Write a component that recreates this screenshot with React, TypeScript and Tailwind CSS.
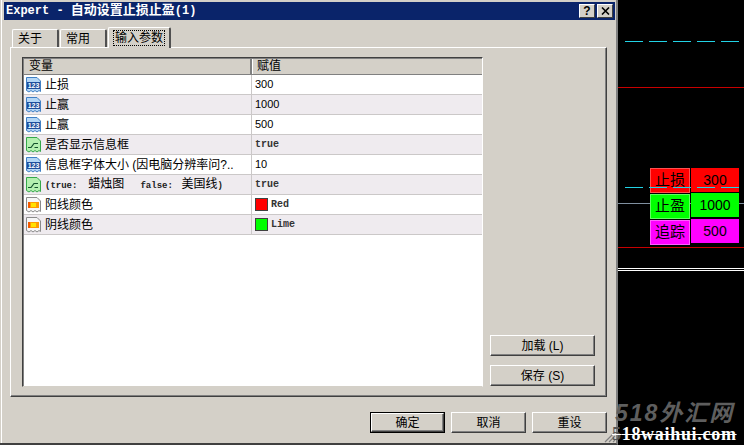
import type { ReactNode } from 'react';

const cjk = "font-['Liberation_Sans','Noto_Sans_CJK_SC',sans-serif]";
const mono = "font-['Liberation_Mono','Noto_Sans_CJK_SC',monospace]";

type ParamRow = {
  kind: 'int' | 'bool' | 'color';
  name: ReactNode;
  value: string;
  swatch?: string;
};

const Ascii = ({ children }: { children: string }) => (
  <span className={`${mono} text-[9px] font-bold text-[#222]`}>{children}</span>
);

const rows: ParamRow[] = [
  { kind: 'int', name: '止损', value: '300' },
  { kind: 'int', name: '止赢', value: '1000' },
  { kind: 'int', name: '止赢', value: '500' },
  { kind: 'bool', name: '是否显示信息框', value: 'true' },
  { kind: 'int', name: '信息框字体大小 (因电脑分辨率问?..', value: '10' },
  {
    kind: 'bool',
    name: (
      <>
        <Ascii>{'(true:  '}</Ascii>蜡烛图<Ascii>{'   false: '}</Ascii> 美国线<Ascii>{')'}</Ascii>
      </>
    ),
    value: 'true',
  },
  { kind: 'color', name: '阳线颜色', value: 'Red', swatch: 'bg-[#ff0000]' },
  { kind: 'color', name: '阴线颜色', value: 'Lime', swatch: 'bg-[#00ff00]' },
];

function RowIcon({ kind }: { kind: ParamRow['kind'] }) {
  const palette = {
    int: { edge: '#3f7fc4', fill: '#b4d6f5' },
    bool: { edge: '#35a84a', fill: '#b4f0b0' },
    color: { edge: '#8a8a8a', fill: '#f6f6f6' },
  }[kind];
  return (
    <svg width="17" height="18" viewBox="0 0 17 18" className="shrink-0">
      <path
        d="M1.5 1.5H12L15.5 5V15.5L14 14.5L12 16L10 14.5L8 16L6 14.5L4 16L1.5 14.5Z"
        fill={palette.fill}
        stroke={palette.edge}
      />
      {kind === 'int' && (
        <>
          <rect x="2" y="6" width="13" height="7" fill="#1f4f9c" />
          <text x="8.5" y="12" textAnchor="middle" fontSize="7" fontWeight="700" fill="#fff" fontFamily="Liberation Sans">
            123
          </text>
        </>
      )}
      {kind === 'bool' && <path d="M3 11.5H6L9 7.5H13M9.5 11.5H13" fill="none" stroke="#14532d" strokeWidth="1.2" />}
      {kind === 'color' && (
        <>
          <rect x="3" y="6" width="11" height="6" fill="#ff9a00" />
          <rect x="6" y="7" width="5" height="4" fill="#ffe100" />
          <rect x="3" y="6" width="2" height="6" fill="#f25a00" />
        </>
      )}
    </svg>
  );
}

function RaisedButton({ label, wide, isDefault }: { label: string; wide?: boolean; isDefault?: boolean }) {
  const bevel =
    'flex items-center justify-center bg-[#d4d0c8] border border-t-white border-l-white border-r-[#404040] border-b-[#404040] shadow-[inset_-1px_-1px_0_#808080] text-[12px] text-black';
  if (isDefault) {
    return (
      <div className="w-[75px] h-[21px] border border-black flex">
        <div className={`flex-1 ${bevel}`}>{label}</div>
      </div>
    );
  }
  return <div className={`${wide ? 'w-[105px]' : 'w-[75px]'} h-[21px] ${bevel}`}>{label}</div>;
}

function Tab({ label, active, width }: { label: string; active?: boolean; width: string }) {
  return (
    <div
      className={`${width} flex items-center bg-[#d4d0c8] border-t border-l border-t-white border-l-white border-r-2 border-r-[#505050] rounded-t-[2px] text-[12px] text-black ${
        active ? 'h-[21px] z-10 -mb-px justify-center' : 'h-[18px] pl-[5px]'
      }`}
    >
      <span className={active ? 'outline outline-1 outline-dotted outline-black px-px leading-[14px]' : ''}>{label}</span>
    </div>
  );
}

function ChartDashes({ top }: { top: string }) {
  return (
    <div className={`absolute left-[7px] ${top} flex gap-[6px]`}>
      {[0, 1, 2, 3, 4].map((i) => (
        <div key={i} className="w-[18px] h-px bg-[#22d3e6]" />
      ))}
    </div>
  );
}

export default function App() {
  return (
    <div className={`relative w-[744px] h-[445px] flex overflow-hidden bg-black ${cjk}`}>
      {/* Dialog */}
      <div className="w-[618px] h-[445px] shrink-0 flex flex-col bg-[#d4d0c8] shadow-[inset_1px_0_0_#d4d0c8,inset_2px_0_0_#fff] border-r-2 border-r-[#808080] border-b-2 border-b-[#404040] pl-[4px] pr-[1px] pt-[2px] relative">
        <div className="h-[18px] shrink-0 flex items-center justify-between bg-[#0a246a] pl-[2px] pr-[2px]">
          <span className={`${mono} text-[12px] font-bold text-white whitespace-nowrap`}>
            Expert - <span className="text-[13px]">自动设置止损止盈</span>(1)
          </span>
          <div className="flex gap-[2px]">
            <div className="w-[16px] h-[14px] flex items-center justify-center bg-[#d4d0c8] border border-t-white border-l-white border-r-[#404040] border-b-[#404040] text-[12px] font-bold text-black leading-none">
              ?
            </div>
            <div className="w-[16px] h-[14px] flex items-center justify-center bg-[#d4d0c8] border border-t-white border-l-white border-r-[#404040] border-b-[#404040]">
              <svg width="9" height="8" viewBox="0 0 9 8">
                <path d="M1 0.5L8 7.5M8 0.5L1 7.5" stroke="#000" strokeWidth="1.6" />
              </svg>
            </div>
          </div>
        </div>

        {/* Tabs */}
        <div className="ml-[8px] mt-[7px] flex items-end gap-[1px] h-[20px] shrink-0">
          <Tab label="关于" width="w-[47px]" />
          <Tab label="常用" width="w-[47px]" />
          <Tab label="输入参数" width="w-[63px]" active />
        </div>

        {/* Tab panel */}
        <div className="ml-[6px] w-[597px] h-[350px] shrink-0 flex gap-[7px] bg-[#d4d0c8] border border-t-white border-l-white border-r-[#404040] border-b-[#404040] shadow-[inset_-1px_-1px_0_#808080] pl-[11px] pt-[9px]">
          <div className="w-[461px] h-[330px] shrink-0 flex flex-col bg-white border border-t-[#404040] border-l-[#404040] border-r-white border-b-[#d4d0c8] shadow-[inset_1px_1px_0_#808080] pl-px pt-px">
            <div className="h-[16px] shrink-0 flex bg-[#d4d0c8] border-b border-b-[#808080] text-[12px] text-black">
              <div className="w-[228px] shrink-0 pl-[5px] border-r-2 border-r-[#808080] leading-[14px]">变量</div>
              <div className="pl-[4px] leading-[14px] border-l border-l-white">赋值</div>
            </div>
            {rows.map((row, i) => (
              <div
                key={i}
                className={`h-[20px] shrink-0 flex items-center border-b border-b-[#cbc8c8] text-black ${
                  i % 2 === 1 ? 'bg-[#efebef]' : 'bg-white'
                }`}
              >
                <div className="w-[228px] shrink-0 h-full flex items-center gap-[3px] pl-[1px] border-r border-r-[#cbc8c8] overflow-hidden">
                  <RowIcon kind={row.kind} />
                  <span className="text-[12px] whitespace-pre">{row.name}</span>
                </div>
                <div className="flex items-center gap-[3px] pl-[3px]">
                  {row.swatch && <div className={`w-[13px] h-[13px] border border-[#404040] ${row.swatch}`} />}
                  <span
                    className={
                      row.kind === 'int'
                        ? "text-[11px] font-['Liberation_Sans',sans-serif]"
                        : `${mono} text-[10px] font-bold text-[#333]`
                    }
                  >
                    {row.value}
                  </span>
                </div>
              </div>
            ))}
          </div>
          <div className="flex flex-col gap-[9px] pt-[278px]">
            <RaisedButton label="加载 (L)" wide />
            <RaisedButton label="保存 (S)" wide />
          </div>
        </div>

        {/* Footer buttons */}
        <div className="flex justify-end gap-[6px] pr-[8px] mt-[15px]">
          <RaisedButton label="确定" isDefault />
          <RaisedButton label="取消" />
          <RaisedButton label="重设" />
        </div>

        {/* Size grip */}
        <svg width="12" height="12" viewBox="0 0 12 12" className="absolute right-0 bottom-0">
          <path d="M11 1L1 11M11 5L5 11M11 9L9 11" stroke="#808080" strokeWidth="1.2" fill="none" />
        </svg>
      </div>

      {/* Chart behind the dialog */}
      <div className="relative flex-1 h-full bg-black">
        <ChartDashes top="top-[41px]" />
        <div className="absolute left-0 right-0 top-[87px] h-px bg-[#c80000]" />
        <div className="absolute left-0 right-0 top-[203px] h-px bg-[#8090a0]" />
        <div className="absolute left-0 right-0 top-[247px] h-px bg-[#c80000]" />
        <div className="absolute left-0 right-0 top-[268px] h-px bg-white" />
        <div className="absolute left-0 right-0 top-[270px] h-px bg-white" />

        {/* Order panel */}
        <div className="absolute left-[32px] top-[168px] flex gap-px text-[15px] text-black">
          <div className="flex flex-col gap-px">
            <div className="w-[40px] h-[25px] flex items-center justify-center bg-[#ff0000] border border-[#ff5050]">止损</div>
            <div className="w-[40px] h-[25px] flex items-center justify-center bg-[#00ff00] border border-[#60ff60]">止盈</div>
            <div className="w-[40px] h-[25px] flex items-center justify-center bg-[#ff00ff] border border-[#ff60ff]">追踪</div>
          </div>
          <div className="flex flex-col text-[14px]">
            <div className="w-[48px] h-[24px] flex items-center justify-center bg-[#ff0000]">300</div>
            <div className="w-[48px] h-[24px] mt-px flex items-center justify-center bg-[#00ff00]">1000</div>
            <div className="w-[48px] h-[24px] mt-[2px] flex items-center justify-center bg-[#ff00ff]">500</div>
          </div>
        </div>
        <ChartDashes top="top-[187px]" />

        {/* Watermark */}
        <div className="absolute left-[-3px] top-[400px] text-[23px] leading-[26px] font-bold italic text-[#5e5e5e] whitespace-nowrap tracking-[2px]">
          518外汇网
        </div>
      </div>
      <div className="absolute left-[612px] top-[424px] text-[18px] leading-[20px] font-bold font-['Liberation_Serif',serif] text-white line-through whitespace-nowrap tracking-[0.7px]">
        <span className="text-[#555]">5</span>18waihui.com
      </div>
    </div>
  );
}
